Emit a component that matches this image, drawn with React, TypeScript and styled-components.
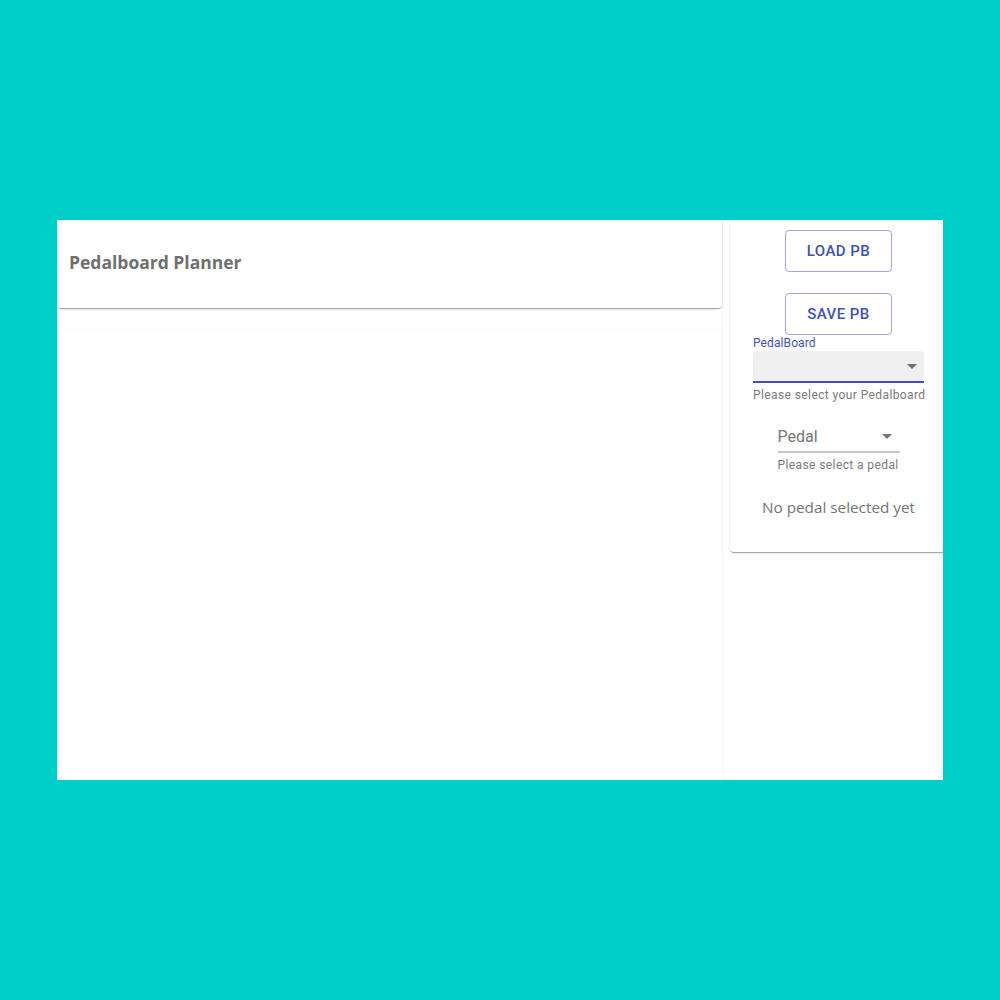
import React from "react";
import styled, { createGlobalStyle } from "styled-components";

const GlobalStyle = createGlobalStyle`
  html, body { margin: 0; padding: 0; }
  body { background: #00cec9; font-family: Roboto, "Liberation Sans", sans-serif; }
`;

const Page = styled.div`
  height: 1000px;
  display: flex;
  align-items: center;
  justify-content: center;
`;

const Board = styled.div`
  width: 886px;
  height: 560px;
  background: #ffffff;
  display: grid;
  grid-template-columns: 665px 221px;
  overflow: hidden;
`;

const LeftCol = styled.div`
  display: flex;
  flex-direction: column;
  gap: 21px;
  min-height: 0;
`;

const HeaderCard = styled.header`
  height: 88px;
  box-sizing: border-box;
  flex: none;
  display: flex;
  align-items: center;
  padding: 0 0 4px 12px;
  background: #fff;
  border-radius: 0 0 4px 4px;
  box-shadow: 0 2px 1px -1px rgba(0, 0, 0, 0.2), 0 1px 1px 0 rgba(0, 0, 0, 0.14),
    0 1px 3px 0 rgba(0, 0, 0, 0.12);
`;

const Title = styled.h1`
  margin: 0;
  font-family: "Open Sans", "Liberation Sans", sans-serif;
  font-weight: 700;
  font-size: 17.5px;
  color: #6f6f6f;
`;

const ContentCard = styled.main`
  flex: 1;
  background: #fff;
  border-radius: 4px 4px 0 0;
  box-shadow: 0 0 2px rgba(0, 0, 0, 0.06);
`;

const RightCol = styled.aside`
  padding-left: 8px;
  width: 225px;
  box-sizing: border-box;
  position: relative;
  &::before {
    content: "";
    display: block;
    position: absolute;
    left: 0;
    top: 0;
    bottom: 0;
    width: 1px;
    background: rgba(0, 0, 0, 0.035);
  }
`;

const SideCard = styled.section`
  width: 217px;
  display: flex;
  flex-direction: column;
  align-items: center;
  padding: 10px 0 33px;
  background: #fff;
  border-radius: 0 0 4px 4px;
  box-shadow: 0 2px 1px -1px rgba(0, 0, 0, 0.2), 0 1px 1px 0 rgba(0, 0, 0, 0.14),
    0 1px 3px 0 rgba(0, 0, 0, 0.12);
`;

const OutlinedButton = styled.button<{ $mt?: number }>`
  margin-top: ${(p) => p.$mt ?? 0}px;
  height: 42px;
  padding: 0 21px;
  box-sizing: border-box;
  border: 1px solid rgba(63, 81, 181, 0.5);
  border-radius: 4px;
  background: transparent;
  color: #3f51b5;
  font-family: Roboto, "Liberation Sans", sans-serif;
  font-weight: 500;
  font-size: 15px;
  letter-spacing: 0.46px;
  text-transform: uppercase;
  cursor: pointer;
`;

const Field = styled.div<{ $w: number; $mt?: number }>`
  width: ${(p) => p.$w}px;
  margin-top: ${(p) => p.$mt ?? 0}px;
  display: flex;
  flex-direction: column;
  font-family: Roboto, "Liberation Sans", sans-serif;
`;

const SmallLabel = styled.label`
  font-size: 12px;
  line-height: 16px;
  color: #3f51b5;
  letter-spacing: 0.1px;
`;

const FilledBox = styled.div`
  height: 30px;
  background: #f0f0f0;
  border-bottom: 2px solid #3f51b5;
  border-radius: 4px 4px 0 0;
  display: flex;
  align-items: center;
  justify-content: flex-end;
  padding-right: 7px;
`;

const StandardBox = styled.div`
  height: 33px;
  border-bottom: 2px solid #c6c6c6;
  display: flex;
  align-items: center;
  justify-content: space-between;
  padding: 2px 8px 0 0;
  box-sizing: border-box;
`;

const Value = styled.span`
  font-size: 16px;
  color: #777777;
`;

const Helper = styled.p`
  margin: 4px 0 0;
  font-size: 12px;
  line-height: 16px;
  color: #7a7a7a;
  letter-spacing: 0.4px;
  white-space: nowrap;
`;

const Empty = styled.p`
  margin: 22px 0 0;
  font-family: "Open Sans", "Liberation Sans", sans-serif;
  font-size: 15.3px;
  line-height: 24px;
  color: #757575;
`;

const Arrow = () => (
  <svg width="10" height="5" viewBox="7 10 10 5" fill="rgba(0,0,0,0.54)">
    <path d="M7 10l5 5 5-5z" />
  </svg>
);

export default function App() {
  return (
    <>
      <GlobalStyle />
      <Page>
        <Board>
          <LeftCol>
            <HeaderCard>
              <Title>Pedalboard Planner</Title>
            </HeaderCard>
            <ContentCard />
          </LeftCol>
          <RightCol>
            <SideCard>
              <OutlinedButton>Load PB</OutlinedButton>
              <OutlinedButton $mt={21}>Save PB</OutlinedButton>
              <Field $w={171}>
                <SmallLabel>PedalBoard</SmallLabel>
                <FilledBox>
                  <Arrow />
                </FilledBox>
                <Helper>Please select your Pedalboard</Helper>
              </Field>
              <Field $w={122} $mt={17}>
                <StandardBox>
                  <Value>Pedal</Value>
                  <Arrow />
                </StandardBox>
                <Helper>Please select a pedal</Helper>
              </Field>
              <Empty>No pedal selected yet</Empty>
            </SideCard>
          </RightCol>
        </Board>
      </Page>
    </>
  );
}
